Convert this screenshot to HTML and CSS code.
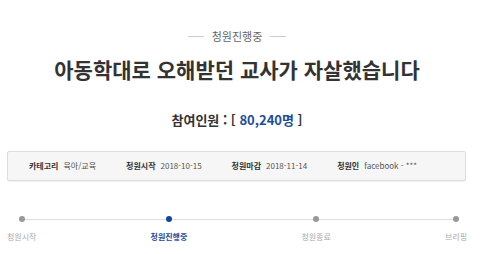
FILE: index.html
```html
<!DOCTYPE html>
<html lang="ko">
<head>
  <meta charset="UTF-8">
  <meta name="viewport" content="width=device-width, initial-scale=1.0">
  <title>청원진행중</title>
  <link rel="stylesheet" href="styles.css">
</head>
<body>
  <div class="petition">
    <div class="status"><span>청원진행중</span></div>
    <h1 class="title">아동학대로 오해받던 교사가 자살했습니다</h1>
    <h2 class="count">참여인원 : [ <span class="num">80,240명</span> ]</h2>

    <ul class="info">
      <li><strong>카테고리</strong> <span>육아/교육</span></li>
      <li><strong>청원시작</strong> <span>2018-10-15</span></li>
      <li><strong>청원마감</strong> <span>2018-11-14</span></li>
      <li><strong>청원인</strong> <span>facebook - ***</span></li>
    </ul>

    <ol class="steps">
      <li><i class="dot"></i><span>청원시작</span></li>
      <li class="on"><i class="dot"></i><span>청원진행중</span></li>
      <li><i class="dot"></i><span>청원종료</span></li>
      <li><i class="dot"></i><span>브리핑</span></li>
    </ol>
  </div>
</body>
</html>
```

FILE: styles.css
```css
body {
  margin: 0;
  background: #fff;
  color: #333;
  font-family: "Noto Sans CJK KR", "Noto Sans", sans-serif;
}
.petition {
  width: 460px;
  margin-left: 7px;
}
.status {
  margin-top: 29px;
  display: flex;
  justify-content: center;
  align-items: center;
  gap: 8px;
  font-size: 11px;
  line-height: 14px;
  color: #666;
}
.status::before,
.status::after {
  content: "";
  width: 16px;
  height: 1px;
  background: #ccc;
}
.title {
  margin: 13px 0 0;
  text-align: center;
  font-size: 21px;
  line-height: 26px;
  font-weight: bold;
  color: #333;
}
.count {
  margin: 28px 0 0;
  text-align: center;
  font-size: 13px;
  line-height: 20px;
  font-weight: bold;
  color: #333;
}
.count .num { color: #1e4c9a; }
.info {
  list-style: none;
  margin: 21px 0 0;
  padding: 0 0 0 21px;
  width: 459px;
  height: 30px;
  box-sizing: border-box;
  display: flex;
  align-items: center;
  gap: 30px;
  background: #f6f6f6;
  border: 1px solid #ddd;
  border-radius: 2px;
  box-shadow: 0 1px 1px rgba(0, 0, 0, 0.06);
  font-size: 8px;
  line-height: 10px;
}
.info li { display: flex; gap: 5px; }
.info strong { color: #333; }
.info span { color: #555; }
.steps {
  list-style: none;
  margin: 35px 0 0;
  padding: 0;
  position: relative;
  display: flex;
  justify-content: space-between;
  font-size: 8px;
  line-height: 12px;
  color: #aaa;
}
.steps::before {
  content: "";
  position: absolute;
  left: 15px;
  right: 11px;
  top: 3px;
  height: 1px;
  background: #ddd;
}
.steps li {
  display: flex;
  flex-direction: column;
  align-items: center;
  gap: 9px;
}
.steps .dot {
  position: relative;
  width: 6px;
  height: 6px;
  border-radius: 50%;
  background: #999;
}
.steps .on { color: #1e4c9a; font-weight: bold; }
.steps .on .dot { background: #0d47a1; }
```
